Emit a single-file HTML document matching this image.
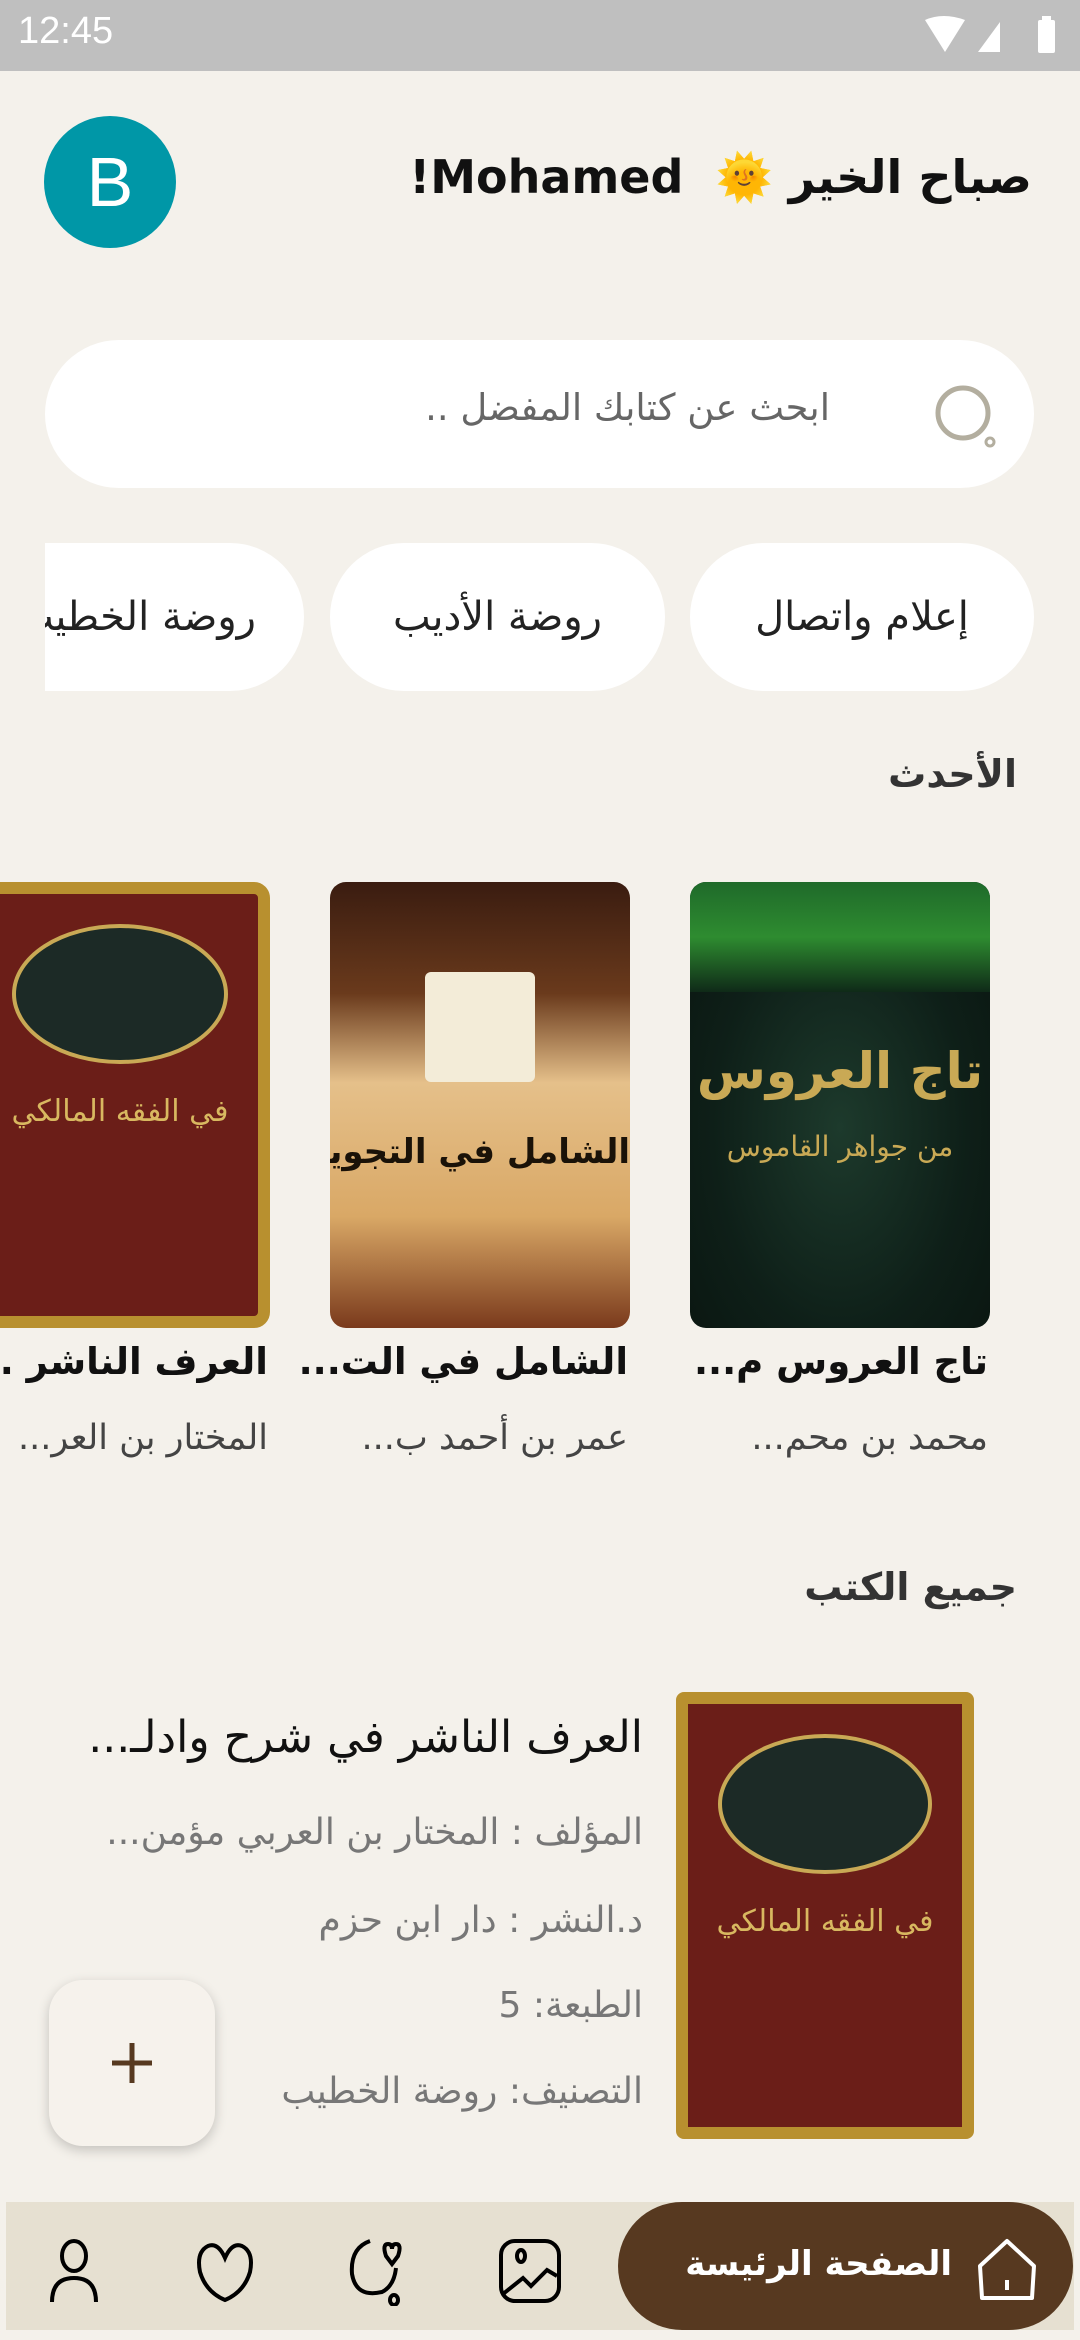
<!DOCTYPE html>
<html><head><meta charset="utf-8"><style>
*{margin:0;padding:0;box-sizing:border-box}
body{width:1080px;height:2340px;background:#f4f1eb;position:relative;overflow:hidden;font-family:"Liberation Sans","Noto Sans CJK SC",sans-serif;}
.abs{position:absolute}
.ar{font-family:"DejaVu Sans","Noto Sans CJK SC",sans-serif;direction:rtl}
.chip{position:absolute;top:543px;height:148px;background:#fff;border-radius:74px;font-size:40px;display:flex;align-items:center;justify-content:center;color:#222}
.cover{position:absolute;top:882px;width:300px;height:446px;border-radius:16px;overflow:hidden}
.t{position:absolute;font-size:37px;font-weight:bold;color:#111;text-align:right;white-space:nowrap}
.a{position:absolute;font-size:35px;color:#444;text-align:right;white-space:nowrap}
.li{position:absolute;right:437px;font-size:36px;color:#777;white-space:nowrap}
</style></head><body>
<div class="abs" style="left:0;top:0;width:1080px;height:71px;background:#bfbfbf"></div>
<div class="abs" style="left:18px;top:10px;font-size:38px;color:#fff">12:45</div>
<svg class="abs" style="left:920px;top:14px" width="150" height="44" viewBox="0 0 150 44">
<path d="M5 6 Q23 -2 45 6 L25 38 Z" fill="#fff"/><path d="M58 38 L80 8 L80 38 Z" fill="#fff"/>
<rect x="118" y="6" width="17" height="33" rx="2" fill="#fff"/><rect x="122" y="2" width="9" height="5" fill="#fff"/>
</svg>
<div class="abs" style="left:44px;top:116px;width:132px;height:132px;border-radius:50%;background:#0097a7;color:#fff;font-size:70px;display:flex;align-items:center;justify-content:center">B</div>
<div class="abs ar" style="right:48px;top:150px;font-size:46px;font-weight:bold;color:#111;white-space:nowrap">صباح الخير 🌞 &nbsp;<span style="unicode-bidi:isolate;direction:ltr">!Mohamed</span></div>
<div class="abs" style="left:45px;top:340px;width:989px;height:148px;background:#fff;border-radius:74px"></div>
<div class="abs ar" style="right:250px;top:386px;font-size:37px;color:#666">ابحث عن كتابك المفضل ..</div>
<svg class="abs" style="left:930px;top:382px" width="70" height="70" viewBox="0 0 70 70"><circle cx="33" cy="31" r="25" fill="none" stroke="#b3ae9f" stroke-width="5"/><circle cx="60" cy="60" r="4" fill="none" stroke="#b3ae9f" stroke-width="3"/></svg>
<div class="chip ar" style="left:690px;width:344px">إعلام واتصال</div>
<div class="chip ar" style="left:330px;width:335px">روضة الأديب</div>
<div style="position:absolute;left:45px;top:543px;width:259px;height:148px;overflow:hidden"><div class="chip ar" style="left:-80px;top:0;width:339px;justify-content:flex-start;padding-right:48px">روضة الخطيب</div></div>
<div class="abs ar" style="right:63px;top:752px;font-size:38px;font-weight:bold;color:#333">الأحدث</div>

<div class="cover" style="left:690px;background:radial-gradient(ellipse at 50% 55%,#1d3a2c 0%,#0e1f18 60%,#0a1510 100%)">
<div style="height:110px;background:linear-gradient(#1f6a2a,#2e8c30 50%,#0f2a18)"></div>
<div class="ar" style="color:#c9a955;font-size:50px;text-align:center;margin-top:50px;font-weight:bold;white-space:nowrap">تاج العروس</div>
<div class="ar" style="color:#c9a955;font-size:28px;text-align:center;margin-top:30px;white-space:nowrap">من جواهر القاموس</div>
</div>
<div class="cover" style="left:330px;background:linear-gradient(#3a1c10 0%,#6a3a1c 25%,#e5c08a 45%,#d9a866 75%,#7a3a1c 100%)">
<div style="margin:90px auto 0;width:110px;height:110px;background:#f3ecd8;border-radius:6px"></div>
<div class="ar" style="color:#1a1208;font-size:34px;text-align:center;font-weight:bold;margin-top:50px;white-space:nowrap">الشامل في التجويد</div>
</div>
<div class="cover" style="left:-30px;background:#6b1e18;border:12px solid #b8902f">
<div style="margin:30px 30px;height:140px;border-radius:50%;background:#1c2a26;border:4px solid #c9a955"></div>
<div class="ar" style="color:#d8b860;font-size:30px;text-align:center;white-space:nowrap">في الفقه المالكي</div>
</div>

<div class="t ar" style="right:92px;top:1340px">تاج العروس م...</div>
<div class="a ar" style="right:92px;top:1418px">محمد بن محم...</div>
<div class="t ar" style="right:452px;top:1340px">الشامل في الت...</div>
<div class="a ar" style="right:452px;top:1418px">عمر بن أحمد ب...</div>
<div class="t ar" style="right:812px;top:1340px">العرف الناشر ...</div>
<div class="a ar" style="right:812px;top:1418px">المختار بن العر...</div>

<div class="abs ar" style="right:63px;top:1565px;font-size:38px;font-weight:bold;color:#333">جميع الكتب</div>
<div class="cover" style="left:676px;top:1692px;width:298px;height:447px;border-radius:8px;background:#6b1e18;border:12px solid #b8902f">
<div style="margin:30px 30px;height:140px;border-radius:50%;background:#1c2a26;border:4px solid #c9a955"></div>
<div class="ar" style="color:#d8b860;font-size:30px;text-align:center;white-space:nowrap">في الفقه المالكي</div>
</div>
<div class="abs ar" style="right:437px;top:1712px;font-size:44px;color:#111;white-space:nowrap">العرف الناشر في شرح وادلـ...</div>
<div class="li ar" style="top:1812px">المؤلف : المختار بن العربي مؤمن...</div>
<div class="li ar" style="top:1900px">د.النشر : دار ابن حزم</div>
<div class="li ar" style="top:1985px">الطبعة: 5</div>
<div class="li ar" style="top:2071px">التصنيف: روضة الخطيب</div>
<div class="abs" style="left:49px;top:1980px;width:166px;height:166px;border-radius:34px;background:#f6f2ec;box-shadow:0 4px 12px rgba(0,0,0,.2);display:flex;align-items:center;justify-content:center">
<svg width="50" height="50" viewBox="0 0 50 50"><path d="M25 5V45M5 25H45" stroke="#573920" stroke-width="5"/></svg></div>

<div class="abs" style="left:6px;top:2202px;width:1068px;height:128px;background:#e6e0d1"></div>
<div class="abs" style="left:618px;top:2202px;width:455px;height:128px;border-radius:64px;background:#573920"></div>
<div class="abs ar" style="right:128px;top:2244px;font-size:34px;font-weight:bold;color:#fff;white-space:nowrap">الصفحة الرئيسة</div>
<svg class="abs" style="left:972px;top:2236px" width="70" height="70" viewBox="0 0 70 70" fill="none" stroke="#fff" stroke-width="4" stroke-linejoin="round"><path d="M35 5 L62 30 L60 62 L10 62 L8 30 Z"/><path d="M35 44V54"/></svg>
<svg class="abs" style="left:40px;top:2236px" width="70" height="70" viewBox="0 0 70 70" fill="none" stroke="#000" stroke-width="4"><ellipse cx="34" cy="20" rx="12" ry="15"/><path d="M12 66 Q12 42 34 42 Q56 42 56 66"/></svg>
<svg class="abs" style="left:190px;top:2236px" width="70" height="70" viewBox="0 0 70 70" fill="none" stroke="#000" stroke-width="4"><path d="M35 22 Q28 6 18 10 Q6 16 10 36 Q16 56 35 64 Q54 56 60 36 Q64 16 52 10 Q42 6 35 22Z"/></svg>
<svg class="abs" style="left:342px;top:2236px" width="70" height="70" viewBox="0 0 70 70" fill="none" stroke="#000" stroke-width="4"><path d="M28 5 Q8 12 10 38 Q14 62 40 56 Q52 50 54 32"/><path d="M44 20 Q40 8 46 8 Q50 8 50 13 Q50 8 54 8 Q60 8 56 20 L50 28Z"/><ellipse cx="52" cy="64" rx="4" ry="5"/></svg>
<svg class="abs" style="left:495px;top:2236px" width="70" height="70" viewBox="0 0 70 70" fill="none" stroke="#000" stroke-width="4"><rect x="6" y="5" width="58" height="60" rx="14"/><ellipse cx="26" cy="20" rx="4" ry="6"/><path d="M8 58 L28 42 L36 50 L52 34 L62 40"/></svg>
</body></html>
